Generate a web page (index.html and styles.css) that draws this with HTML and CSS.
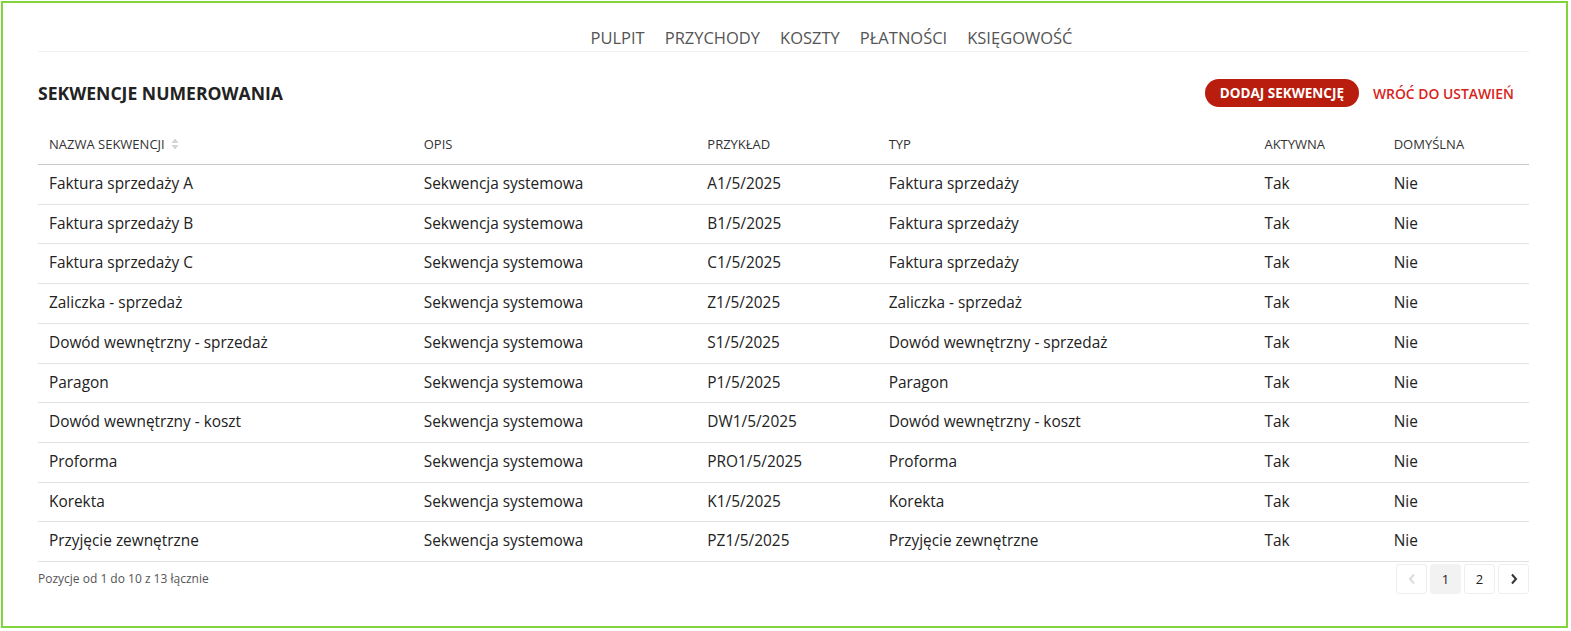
FILE: index.html
```html
<!DOCTYPE html>
<html lang="pl">
<head>
    <meta charset="UTF-8">
    <title>Sekwencje numerowania</title>
    <link rel="stylesheet" href="styles.css">
</head>
<body>

<div class="frame">

    <nav class="top-nav">
        <a href="#">PULPIT</a>
        <a href="#">PRZYCHODY</a>
        <a href="#">KOSZTY</a>
        <a href="#">PŁATNOŚCI</a>
        <a href="#">KSIĘGOWOŚĆ</a>
    </nav>

    <div class="toolbar">
        <h2>SEKWENCJE NUMEROWANIA</h2>
        <div class="actions">
            <a href="#" class="btn-add">DODAJ SEKWENCJĘ</a>
            <a href="#" class="link-back">WRÓĆ DO USTAWIEŃ</a>
        </div>
    </div>

    <table class="seq-table">
        <colgroup>
            <col class="c1"><col class="c2"><col class="c3"><col class="c4"><col class="c5"><col class="c6">
        </colgroup>
        <thead>
            <tr>
                <th>NAZWA SEKWENCJI
                    <svg class="sort" width="8" height="12" viewBox="0 0 8 12"><path d="M4 0.5 L7.5 5 L0.5 5 Z M4 11.5 L7.5 7 L0.5 7 Z" fill="#d4d4d4"/></svg>
                </th>
                <th>OPIS</th>
                <th>PRZYKŁAD</th>
                <th>TYP</th>
                <th>AKTYWNA</th>
                <th>DOMYŚLNA</th>
            </tr>
        </thead>
        <tbody>
            <tr><td>Faktura sprzedaży A</td><td>Sekwencja systemowa</td><td>A1/5/2025</td><td>Faktura sprzedaży</td><td>Tak</td><td>Nie</td></tr>
            <tr><td>Faktura sprzedaży B</td><td>Sekwencja systemowa</td><td>B1/5/2025</td><td>Faktura sprzedaży</td><td>Tak</td><td>Nie</td></tr>
            <tr><td>Faktura sprzedaży C</td><td>Sekwencja systemowa</td><td>C1/5/2025</td><td>Faktura sprzedaży</td><td>Tak</td><td>Nie</td></tr>
            <tr><td>Zaliczka - sprzedaż</td><td>Sekwencja systemowa</td><td>Z1/5/2025</td><td>Zaliczka - sprzedaż</td><td>Tak</td><td>Nie</td></tr>
            <tr><td>Dowód wewnętrzny - sprzedaż</td><td>Sekwencja systemowa</td><td>S1/5/2025</td><td>Dowód wewnętrzny - sprzedaż</td><td>Tak</td><td>Nie</td></tr>
            <tr><td>Paragon</td><td>Sekwencja systemowa</td><td>P1/5/2025</td><td>Paragon</td><td>Tak</td><td>Nie</td></tr>
            <tr><td>Dowód wewnętrzny - koszt</td><td>Sekwencja systemowa</td><td>DW1/5/2025</td><td>Dowód wewnętrzny - koszt</td><td>Tak</td><td>Nie</td></tr>
            <tr><td>Proforma</td><td>Sekwencja systemowa</td><td>PRO1/5/2025</td><td>Proforma</td><td>Tak</td><td>Nie</td></tr>
            <tr><td>Korekta</td><td>Sekwencja systemowa</td><td>K1/5/2025</td><td>Korekta</td><td>Tak</td><td>Nie</td></tr>
            <tr><td>Przyjęcie zewnętrzne</td><td>Sekwencja systemowa</td><td>PZ1/5/2025</td><td>Przyjęcie zewnętrzne</td><td>Tak</td><td>Nie</td></tr>
        </tbody>
    </table>

    <div class="table-footer">
        <div class="info">Pozycje od 1 do 10 z 13 łącznie</div>
        <div class="pagination">
            <a href="#" class="page disabled">
                <svg width="8" height="12" viewBox="0 0 8 12"><path d="M6 1.5 L2 6 L6 10.5" fill="none" stroke="#dcdcdc" stroke-width="2"/></svg>
            </a>
            <a href="#" class="page active">1</a>
            <a href="#" class="page">2</a>
            <a href="#" class="page">
                <svg width="8" height="12" viewBox="0 0 8 12"><path d="M2 1.5 L6 6 L2 10.5" fill="none" stroke="#333" stroke-width="2"/></svg>
            </a>
        </div>
    </div>

</div>

</body>
</html>
```

FILE: styles.css
```css
html, body {
    margin: 0;
    padding: 0;
}

body {
    font-family: "Open Sans", "Liberation Sans", sans-serif;
    color: #222;
    background-color: #fff;
}

a {
    text-decoration: none;
}

.frame {
    box-sizing: border-box;
    margin: 1px 3px 0 1px;
    height: 627px;
    border: 2px solid #7fd53b;
    padding: 0 37px 0 35px;
}

/* menu na gorze */
.top-nav {
    display: flex;
    justify-content: center;
    gap: 20px;
    padding: 24px 0 2px 96px;
    border-bottom: 1px solid #f0f0f0;
}

.top-nav a {
    color: #555;
    font-size: 16.5px;
    line-height: 22px;
}

.toolbar {
    display: flex;
    justify-content: space-between;
    align-items: center;
    margin-top: 27px;
    height: 28px;
}

.toolbar h2 {
    margin: 0;
    font-size: 17.6px;
    font-weight: 700;
    color: #222;
}

.actions {
    display: flex;
    align-items: center;
    gap: 14px;
    padding-right: 15px;
}

.btn-add {
    display: inline-block;
    background-color: #b81d0d;
    color: #fff;
    font-size: 13.5px;
    font-weight: 700;
    line-height: 28px;
    padding: 0 15px;
    border-radius: 14px;
}

.link-back {
    color: #d8231a;
    font-size: 13.9px;
    font-weight: 600;
}

/* tabela */
.seq-table {
    width: 100%;
    table-layout: fixed;
    border-collapse: collapse;
    margin-top: 18px;
}

.c1 { width: 374px; }
.c2 { width: 283px; }
.c3 { width: 181px; }
.c4 { width: 375px; }
.c5 { width: 129px; }
.c6 { width: 146px; }

.seq-table th {
    text-align: left;
    font-weight: 400;
    font-size: 13px;
    color: #333;
    padding: 9px 11px;
    line-height: 21px;
    border-bottom: 1px solid #c8c8c8;
}

.sort {
    vertical-align: -1px;
    margin-left: 3px;
}

.seq-table td {
    font-size: 15.4px;
    color: #222;
    padding: 9px 11px;
    line-height: 20.7px;
    border-bottom: 1px solid #e2e2e2;
}

.table-footer {
    display: flex;
    justify-content: space-between;
    align-items: center;
    margin-top: 2px;
}

.info {
    font-size: 12px;
    color: #555;
    margin-top: -2px;
}

.pagination {
    display: flex;
    gap: 3px;
}

.page {
    box-sizing: border-box;
    width: 31px;
    height: 30px;
    display: flex;
    align-items: center;
    justify-content: center;
    border: 1px solid #eee;
    border-radius: 3px;
    font-size: 13px;
    color: #222;
}

.page.active {
    background-color: #f2f2f2;
    border-color: #f2f2f2;
}
```
